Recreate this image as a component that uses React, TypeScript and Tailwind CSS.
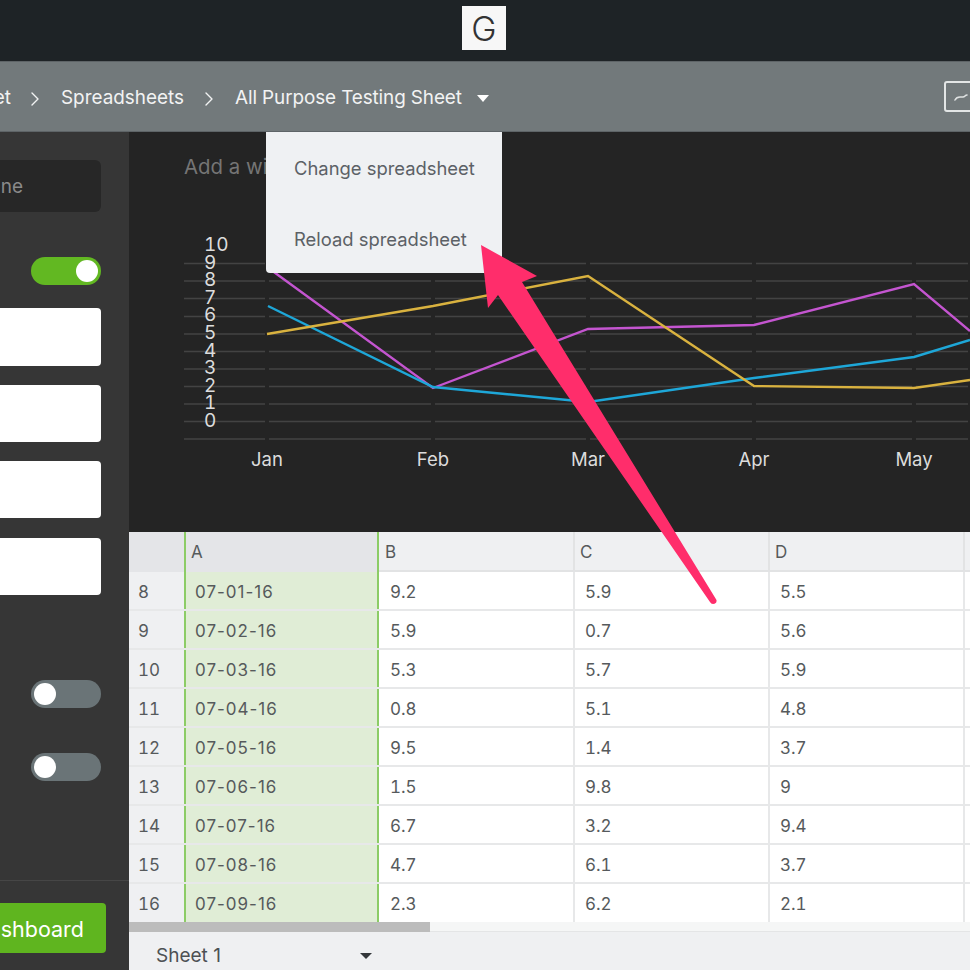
import { ChevronRight } from "lucide-react";

const rows = [
  ["8", "07-01-16", "9.2", "5.9", "5.5"],
  ["9", "07-02-16", "5.9", "0.7", "5.6"],
  ["10", "07-03-16", "5.3", "5.7", "5.9"],
  ["11", "07-04-16", "0.8", "5.1", "4.8"],
  ["12", "07-05-16", "9.5", "1.4", "3.7"],
  ["13", "07-06-16", "1.5", "9.8", "9"],
  ["14", "07-07-16", "6.7", "3.2", "9.4"],
  ["15", "07-08-16", "4.7", "6.1", "3.7"],
  ["16", "07-09-16", "2.3", "6.2", "2.1"],
];

const gridYs = [263.5, 281, 298.5, 316.5, 334, 351.5, 369, 386.5, 404, 421.5, 439];
const ticks = [184, 267, 433, 588, 754, 914, 970];
const months = [
  ["Jan", 267],
  ["Feb", 433],
  ["Mar", 588],
  ["Apr", 754],
  ["May", 914],
] as const;

const Toggle = ({ on, className }: { on?: boolean; className?: string }) => (
  <div
    className={`w-[70px] h-[28px] rounded-full flex items-center px-[3px] ${
      on ? "bg-[#62b822] justify-end" : "bg-[#6a7477] justify-start"
    } ${className ?? ""}`}
  >
    <div className="w-[22px] h-[22px] rounded-full bg-white" />
  </div>
);

const Chart = () => (
  <svg viewBox="129 182 841 350" className="block w-[841px] h-[350px]">
    {gridYs.map((y) =>
      ticks.slice(0, -1).map((x, i) => (
        <line
          key={`${y}-${x}`}
          x1={i === 0 ? x : x + 2}
          x2={ticks[i + 1] - 2}
          y1={y}
          y2={y}
          stroke="#434343"
          strokeWidth="1.5"
        />
      ))
    )}
    {["10", "9", "8", "7", "6", "5", "4", "3", "2", "1", "0"].map((n, i) => (
      <text key={n} x="204" y={251 + i * 17.6} fontSize="19" fill="#dcdcdc" className="tabular-nums">
        {n}
      </text>
    ))}
    {months.map(([m, x]) => (
      <text key={m} x={x} y="466" fontSize="18.5" fill="#dcdcdc" textAnchor="middle">
        {m}
      </text>
    ))}
    <polyline
      points="267,267 433,388 588,329 754,325 914,284 970,331"
      fill="none"
      stroke="#c455d0"
      strokeWidth="2.4"
    />
    <polyline
      points="268,306 433,387 588,402 754,378 914,357 970,340"
      fill="none"
      stroke="#1ea7d8"
      strokeWidth="2.4"
    />
    <polyline
      points="267,334 433,306 588,276 754,386 914,388 970,380"
      fill="none"
      stroke="#d9b23f"
      strokeWidth="2.4"
    />
  </svg>
);

export default function App() {
  return (
    <div className="relative w-[970px] h-[970px] overflow-hidden flex flex-col bg-[#242424] font-['Inter',sans-serif]">
      {/* Top bar */}
      <div className="h-[61px] shrink-0 bg-[#1e2326] flex items-start justify-center pt-[6px] pr-[2px]">
        <div className="w-[44px] h-[44px] bg-[#f7f7f7] flex items-center justify-center text-[34px] font-light text-[#333]">
          G
        </div>
      </div>

      {/* Breadcrumbs */}
      <div className="relative h-[71px] shrink-0 bg-[#72797b] border-y border-[#5e6467] flex items-center pt-[4px] text-[18.9px] text-[#f2f3f3] whitespace-nowrap">
        <div className="w-[11px] overflow-hidden flex justify-end">
          <span>Sheet</span>
        </div>
        <ChevronRight size={24} strokeWidth={1.4} className="ml-[11.5px] mr-[14.5px]" />
        <span>Spreadsheets</span>
        <ChevronRight size={24} strokeWidth={1.4} className="ml-[12.5px] mr-[14.5px]" />
        <span className="tracking-[-0.1px]">All Purpose Testing Sheet</span>
        <div className="ml-[15px] w-0 h-0 border-x-[6px] border-x-transparent border-t-[7px] border-t-white" />

        <div className="absolute left-[944px] top-[19px] w-[50px] h-[31px] border-2 border-[#e3e6e6] rounded-[3px]">
          <svg viewBox="0 0 46 27" className="w-full h-full">
            <path d="M9 17c1-2 3-3 5-3h3c2 0 2-2 4-2" fill="none" stroke="#dfe2e2" strokeWidth="1.6" strokeLinecap="round" />
          </svg>
        </div>

        {/* Dropdown menu */}
        <div className="absolute z-10 left-[266px] top-[70px] w-[236px] h-[141px] bg-[#eff1f3] rounded-b-[4px] text-[18.4px] text-[#5c6166] flex flex-col">
          <div className="h-[71px] pl-[28px] pt-[23px]">Change spreadsheet</div>
          <div className="h-[70px] pl-[28px] pt-[23px]">Reload spreadsheet</div>
        </div>
      </div>

      <div className="flex-1 min-h-0 flex">
        {/* Sidebar */}
        <div className="w-[129px] shrink-0 bg-[#363636] flex flex-col whitespace-nowrap">
          <div className="flex-1 flex flex-col items-end pr-[28px] pt-[28px]">
            <div className="w-[120px] h-[52px] shrink-0 rounded-[6px] bg-[#272727] text-[19px] text-[#8a8a8a] flex items-center justify-end pr-[78px] pt-[3px] overflow-hidden">
              Headline
            </div>
            <Toggle on className="mt-[45px]" />
            <div className="w-[120px] h-[58px] mt-[23px] rounded-[4px] bg-white" />
            <div className="w-[120px] h-[57px] mt-[19px] rounded-[4px] bg-white" />
            <div className="w-[120px] h-[57px] mt-[19px] rounded-[4px] bg-white" />
            <div className="w-[120px] h-[57px] mt-[20px] rounded-[4px] bg-white" />
            <Toggle className="mt-[85px]" />
            <Toggle className="mt-[45px]" />
          </div>
          <div className="h-[90px] shrink-0 border-t border-[#464646] pt-[22px]">
            <div className="w-[106px] h-[50px] rounded-r-[4px] bg-[#5fb51f] text-[21.5px] pt-[2px] text-white flex items-center justify-end pr-[22px] overflow-hidden">
              Go to dashboard
            </div>
          </div>
        </div>

        {/* Main */}
        <div className="flex-1 min-w-0 flex flex-col">
          <div className="h-[400px] shrink-0 bg-[#242424]">
            <div className="h-[50px] pl-[55px] pt-[21px] text-[20.4px] leading-[28px] text-[#757575] whitespace-nowrap">
              Add a widget title
            </div>
            <Chart />
          </div>

          {/* Sheet */}
          <div className="h-[390px] shrink-0 bg-white text-[17px] text-[#565a5c] overflow-hidden">
            <div className="grid grid-cols-[55px_195px_196px_195px_195px_1fr] h-[40px] bg-[#eff0f2] border-b-2 border-[#e2e3e4] leading-[40px]">
              <div className="bg-[#e4e5e8]" />
              <div className="bg-[#e4e5e8] border-x-2 border-[#8ccc66] pl-[5px]">A</div>
              <div className="border-r-2 border-[#e2e3e4] pl-[6px]">B</div>
              <div className="border-r-2 border-[#e2e3e4] pl-[5px]">C</div>
              <div className="border-r-2 border-[#e2e3e4] pl-[5px]">D</div>
              <div />
            </div>
            {rows.map((r, i) => (
              <div
                key={r[0]}
                className={`grid grid-cols-[55px_195px_196px_195px_195px_1fr] h-[39px] leading-[33px] ${
                  i === rows.length - 1 ? "" : "border-b-2 border-[#e7e8e9]"
                }`}
              >
                <div className="bg-[#eff0f2] pl-[9px] pt-[4px] tabular-nums">{r[0]}</div>
                <div className="bg-[#e0edd6] border-x-2 border-x-[#8ccc66] pl-[9px] pt-[4px] tracking-[1px]">{r[1]}</div>
                <div className="border-r-2 border-[#e7e8e9] pl-[11px] pt-[4px] tabular-nums">{r[2]}</div>
                <div className="border-r-2 border-[#e7e8e9] pl-[10px] pt-[4px] tabular-nums">{r[3]}</div>
                <div className="border-r-2 border-[#e7e8e9] pl-[10px] pt-[4px] tabular-nums">{r[4]}</div>
                <div />
              </div>
            ))}
          </div>
        </div>
      </div>

      {/* Scrollbar and sheet picker, over the bottom of the sheet */}
      <div className="absolute left-[129px] right-0 top-[922px] bottom-0 flex flex-col bg-[#eff0f2]">
        <div className="h-[10px] shrink-0 bg-[#f5f6f6] border-b border-[#e4e5e6]">
          <div className="w-[301px] h-[10px] bg-[#bcbcbc]" />
        </div>
        <div className="flex-1 flex items-center text-[19px] text-[#4d5154] pl-[27px] pt-[10px]">
          <span>Sheet 1</span>
          <div className="ml-[139px] w-0 h-0 border-x-[6px] border-x-transparent border-t-[6px] border-t-[#33373a]" />
        </div>
      </div>

      {/* Pink annotation arrow */}
      <svg viewBox="470 235 260 380" className="absolute left-[470px] top-[235px] w-[260px] h-[380px] z-20">
        <path
          d="M481 245L537 276L522 282L716.5 600Q717 604 713 604Q711 604 710 602L498 295L488 308Z"
          fill="#ff2d6b"
        />
      </svg>
    </div>
  );
}
